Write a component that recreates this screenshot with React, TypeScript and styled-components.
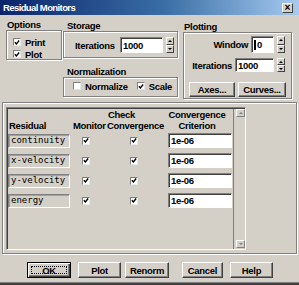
import React from "react";
import styled, { createGlobalStyle } from "styled-components";

const GlobalStyle = createGlobalStyle`
  html, body {
    margin: 0;
    padding: 0;
    background: #d4d0c8;
  }
  * {
    box-sizing: border-box;
  }
`;

const COLS = "63px 36px 61px 65px";

const residuals = ["continuity", "x-velocity", "y-velocity", "energy"];

const buttons = [
  { label: "OK", ml: 27, w: 44, isDefault: true },
  { label: "Plot", ml: 7, w: 43 },
  { label: "Renorm", ml: 4, w: 44 },
  { label: "Cancel", ml: 13, w: 41 },
  { label: "Help", ml: 7, w: 43 },
];

const Check = ({ checked }: { checked?: boolean }) => (
  <CheckBox>
    {checked && (
      <svg width="7" height="7" viewBox="0 0 7 7">
        <path d="M1 3.2 L2.8 5.2 L6 1.2" stroke="#000" strokeWidth="1.6" fill="none" />
      </svg>
    )}
  </CheckBox>
);

const Spinner = ({ h }: { h: number }) => (
  <SpinCol style={{ height: h }}>
    <SpinBtn>
      <ArrowUp />
    </SpinBtn>
    <SpinBtn>
      <ArrowDown />
    </SpinBtn>
  </SpinCol>
);

const App: React.FC = () => {
  return (
    <>
      <GlobalStyle />
      <Win>
        <TitleBar>
          <span>Residual Monitors</span>
          <CloseBtn>×</CloseBtn>
        </TitleBar>

        <TopArea>
          <Column $top={4} $left={0} $width={56}>
            <GroupLabel $indent={1}>Options</GroupLabel>
            <Etched $h={30}>
              <OptionsBody>
                <CheckRow>
                  <Check checked />
                  <span>Print</span>
                </CheckRow>
                <CheckRow>
                  <Check checked />
                  <span>Plot</span>
                </CheckRow>
              </OptionsBody>
            </Etched>
          </Column>

          <Column $top={5} $left={1} $width={115}>
            <GroupLabel $indent={4}>Storage</GroupLabel>
            <Etched $h={27}>
              <FieldRow $pl={11} $pt={5}>
                <FieldLabel $w={45}>Iterations</FieldLabel>
                <TextInput $w={43} $h={16}>1000</TextInput>
                <Spinner h={16} />
              </FieldRow>
            </Etched>
            <GroupLabel $indent={4} style={{ marginTop: 8 }}>
              Normalization
            </GroupLabel>
            <Etched $h={20}>
              <NormRow>
                <CheckRow>
                  <Check />
                  <span>Normalize</span>
                </CheckRow>
                <CheckRow>
                  <Check checked />
                  <span>Scale</span>
                </CheckRow>
              </NormRow>
            </Etched>
          </Column>

          <Column $top={6} $left={5} $width={109}>
            <GroupLabel $indent={1}>Plotting</GroupLabel>
            <Etched $h={67}>
              <PlotBody>
                <RightRow $h={17}>
                  <span>Window</span>
                  <TextInput $w={23} $h={17}>
                    <Caret />0
                  </TextInput>
                  <Spinner h={17} />
                </RightRow>
                <RightRow $h={14} style={{ marginTop: 5 }}>
                  <span>Iterations</span>
                  <TextInput $w={39} $h={14}>1000</TextInput>
                  <Spinner h={14} />
                </RightRow>
                <ButtonRow>
                  <PushButton $w={46} $h={15}>Axes...</PushButton>
                  <PushButton $w={48} $h={15}>Curves...</PushButton>
                </ButtonRow>
              </PlotBody>
            </Etched>
          </Column>
        </TopArea>

        <Panel>
          <ScrollFrame>
            <Table>
              <Row $h={11}>
                <Cell />
                <Cell />
                <Cell $pl={1}>Check</Cell>
                <Cell $center>Convergence</Cell>
              </Row>
              <Row $h={11}>
                <Cell $pl={1}>Residual</Cell>
                <Cell $pl={2}>Monitor</Cell>
                <Cell>Convergence</Cell>
                <Cell $center>Criterion</Cell>
              </Row>
              {residuals.map((name, i) => (
                <Row key={name} $h={15} style={{ marginTop: i === 0 ? 2 : 5 }}>
                  <Cell>
                    <NameBox>{name}</NameBox>
                  </Cell>
                  <Cell $pl={11}>
                    <Check checked />
                  </Cell>
                  <Cell $pl={23}>
                    <Check checked />
                  </Cell>
                  <Cell>
                    <TextInput $w={64} $h={15}>1e-06</TextInput>
                  </Cell>
                </Row>
              ))}
            </Table>
            <ScrollBar>
              <ScrollArrow>
                <GrayUp />
              </ScrollArrow>
              <ScrollArrow>
                <GrayDown />
              </ScrollArrow>
            </ScrollBar>
          </ScrollFrame>
        </Panel>

        <BottomBar>
          {buttons.map((b) => (
            <PushButton
              key={b.label}
              $w={b.w}
              $h={16}
              $default={b.isDefault}
              style={{ marginLeft: b.ml }}
            >
              {b.label}
            </PushButton>
          ))}
        </BottomBar>
      </Win>
    </>
  );
};

export default App;

const Win = styled.div`
  width: 299px;
  height: 285px;
  background: #d4d0c8;
  overflow: hidden;
  display: flex;
  flex-direction: column;
  font-family: "Liberation Sans", Arial, sans-serif;
  font-size: 9.5px;
  font-weight: bold;
  letter-spacing: -0.3px;
  color: #000;
  box-shadow: inset 0 -2px 0 #404040, inset 0 -3px 0 #808080;
`;

const TitleBar = styled.div`
  flex: none;
  height: 15px;
  padding: 0 6px 0 3px;
  display: flex;
  align-items: center;
  justify-content: space-between;
  background: linear-gradient(to right, #0a246a 0%, #3a6ea5 55%, #a6caf0 100%);
  color: #fff;
  letter-spacing: -0.6px;
`;

const CloseBtn = styled.span`
  width: 11px;
  height: 10px;
  display: flex;
  align-items: center;
  justify-content: center;
  background: #d4d0c8;
  color: #000;
  font-size: 10px;
  line-height: 10px;
  letter-spacing: 0;
  border: 1px solid;
  border-color: #fff #404040 #404040 #fff;
`;

const TopArea = styled.div`
  flex: none;
  height: 87px;
  padding-left: 6px;
  display: flex;
  align-items: flex-start;
`;

const Column = styled.div<{ $top: number; $left: number; $width: number }>`
  margin-top: ${(p) => p.$top}px;
  margin-left: ${(p) => p.$left}px;
  width: ${(p) => p.$width}px;
  display: flex;
  flex-direction: column;
`;

const GroupLabel = styled.div<{ $indent: number }>`
  height: 11px;
  line-height: 11px;
  padding-left: ${(p) => p.$indent}px;
  white-space: nowrap;
`;

const Etched = styled.div<{ $h: number }>`
  height: ${(p) => p.$h}px;
  border: 1px solid #808080;
  box-shadow: inset 1px 1px 0 #fff, 1px 1px 0 #fff;
`;

const OptionsBody = styled.div`
  padding: 5px 0 0 6px;
  display: flex;
  flex-direction: column;
`;

const CheckRow = styled.div`
  height: 12px;
  display: flex;
  align-items: center;
  gap: 4px;
  white-space: nowrap;
`;

const CheckBox = styled.span`
  flex: none;
  width: 8px;
  height: 8px;
  display: flex;
  align-items: center;
  justify-content: center;
  background: #fff;
  border: 1px solid;
  border-color: #808080 #e8e8e8 #e8e8e8 #808080;
`;

const FieldRow = styled.div<{ $pl: number; $pt: number }>`
  padding: ${(p) => p.$pt}px 0 0 ${(p) => p.$pl}px;
  display: flex;
  align-items: center;
`;

const FieldLabel = styled.span<{ $w: number }>`
  width: ${(p) => p.$w}px;
  white-space: nowrap;
`;

const TextInput = styled.div<{ $w: number; $h: number }>`
  flex: none;
  width: ${(p) => p.$w}px;
  height: ${(p) => p.$h}px;
  padding-left: 2px;
  display: flex;
  align-items: center;
  background: #fff;
  border: 1px solid;
  border-color: #808080 #fff #fff #808080;
  box-shadow: inset 1px 1px 0 #404040;
  white-space: nowrap;
`;

const Caret = styled.span`
  width: 2px;
  height: 10px;
  margin-right: 1px;
  background: #000;
`;

const SpinCol = styled.div`
  flex: none;
  width: 8px;
  margin-left: 3px;
  display: flex;
  flex-direction: column;
`;

const SpinBtn = styled.div`
  flex: 1;
  display: flex;
  align-items: center;
  justify-content: center;
  background: #d4d0c8;
  border: 1px solid;
  border-color: #fff #404040 #404040 #fff;
`;

const ArrowUp = styled.span`
  width: 0;
  height: 0;
  border-left: 2px solid transparent;
  border-right: 2px solid transparent;
  border-bottom: 2px solid #000;
`;

const ArrowDown = styled.span`
  width: 0;
  height: 0;
  border-left: 2px solid transparent;
  border-right: 2px solid transparent;
  border-top: 2px solid #000;
`;

const NormRow = styled.div`
  height: 100%;
  padding: 0 0 2px 9px;
  display: flex;
  align-items: center;
  gap: 9px;
`;

const PlotBody = styled.div`
  padding: 3px 6px 0 5px;
  display: flex;
  flex-direction: column;
`;

const RightRow = styled.div<{ $h: number }>`
  height: ${(p) => p.$h}px;
  display: flex;
  align-items: center;
  justify-content: flex-end;
  gap: 3px;
  white-space: nowrap;

  & > ${SpinCol} {
    margin-left: 0;
  }
`;

const ButtonRow = styled.div`
  margin-top: 10px;
  display: flex;
  gap: 3px;
`;

const PushButton = styled.div<{ $w: number; $h: number; $default?: boolean }>`
  position: relative;
  flex: none;
  width: ${(p) => p.$w}px;
  height: ${(p) => p.$h}px;
  display: flex;
  align-items: center;
  justify-content: center;
  background: #d4d0c8;
  border: 1px solid;
  border-color: ${(p) => (p.$default ? "#000" : "#fff #404040 #404040 #fff")};
  box-shadow: ${(p) =>
    p.$default
      ? "inset 1px 1px 0 #fff, inset -1px -1px 0 #404040, inset -2px -2px 0 #808080"
      : "inset -1px -1px 0 #808080"};
  white-space: nowrap;

  &::after {
    content: "";
    display: ${(p) => (p.$default ? "block" : "none")};
    position: absolute;
    inset: 3px;
    border: 1px dotted #000;
  }
`;

const Panel = styled.div`
  flex: none;
  width: 295px;
  height: 152px;
  margin: 0 2px;
  padding: 4px 0 0 3px;
  border: 1px solid #808080;
  box-shadow: inset 1px 1px 0 #fff, 1px 1px 0 #fff;
`;

const ScrollFrame = styled.div`
  width: 240px;
  height: 143px;
  display: flex;
  border: 1px solid;
  border-color: #808080 #fff #fff #808080;
  box-shadow: inset 1px 1px 0 #404040;
  padding: 1px 0 0 1px;
`;

const Table = styled.div`
  flex: none;
  width: 225px;
  display: flex;
  flex-direction: column;
`;

const Row = styled.div<{ $h: number }>`
  height: ${(p) => p.$h}px;
  display: grid;
  grid-template-columns: ${COLS};
  line-height: 11px;
`;

const Cell = styled.div<{ $pl?: number; $center?: boolean }>`
  display: flex;
  align-items: center;
  justify-content: ${(p) => (p.$center ? "center" : "flex-start")};
  padding-left: ${(p) => p.$pl ?? 0}px;
  padding-right: ${(p) => (p.$center ? 7 : 0)}px;
  white-space: nowrap;
`;

const NameBox = styled.div`
  width: 62px;
  height: 14px;
  padding-left: 2px;
  display: flex;
  align-items: center;
  font-family: "DejaVu Sans Mono", "Liberation Mono", monospace;
  font-size: 9px;
  font-weight: normal;
  letter-spacing: 0;
  border: 1px solid;
  border-color: #808080 #fff #fff #808080;
  box-shadow: inset 1px 1px 0 #a0a0a0;
`;

const ScrollBar = styled.div`
  flex: none;
  width: 12px;
  height: 100%;
  display: flex;
  flex-direction: column;
  justify-content: space-between;
  padding: 0 0 1px 2px;
  border-left: 1px solid #808080;
`;

const ScrollArrow = styled.div`
  width: 9px;
  height: 8px;
  display: flex;
  align-items: center;
  justify-content: center;
  background: #d4d0c8;
  border: 1px solid;
  border-color: #fff #808080 #808080 #fff;
`;

const GrayUp = styled.span`
  width: 0;
  height: 0;
  border-left: 2px solid transparent;
  border-right: 2px solid transparent;
  border-bottom: 2px solid #808080;
`;

const GrayDown = styled.span`
  width: 0;
  height: 0;
  border-left: 2px solid transparent;
  border-right: 2px solid transparent;
  border-top: 2px solid #808080;
`;

const BottomBar = styled.div`
  flex: none;
  margin-top: 8px;
  display: flex;
`;
